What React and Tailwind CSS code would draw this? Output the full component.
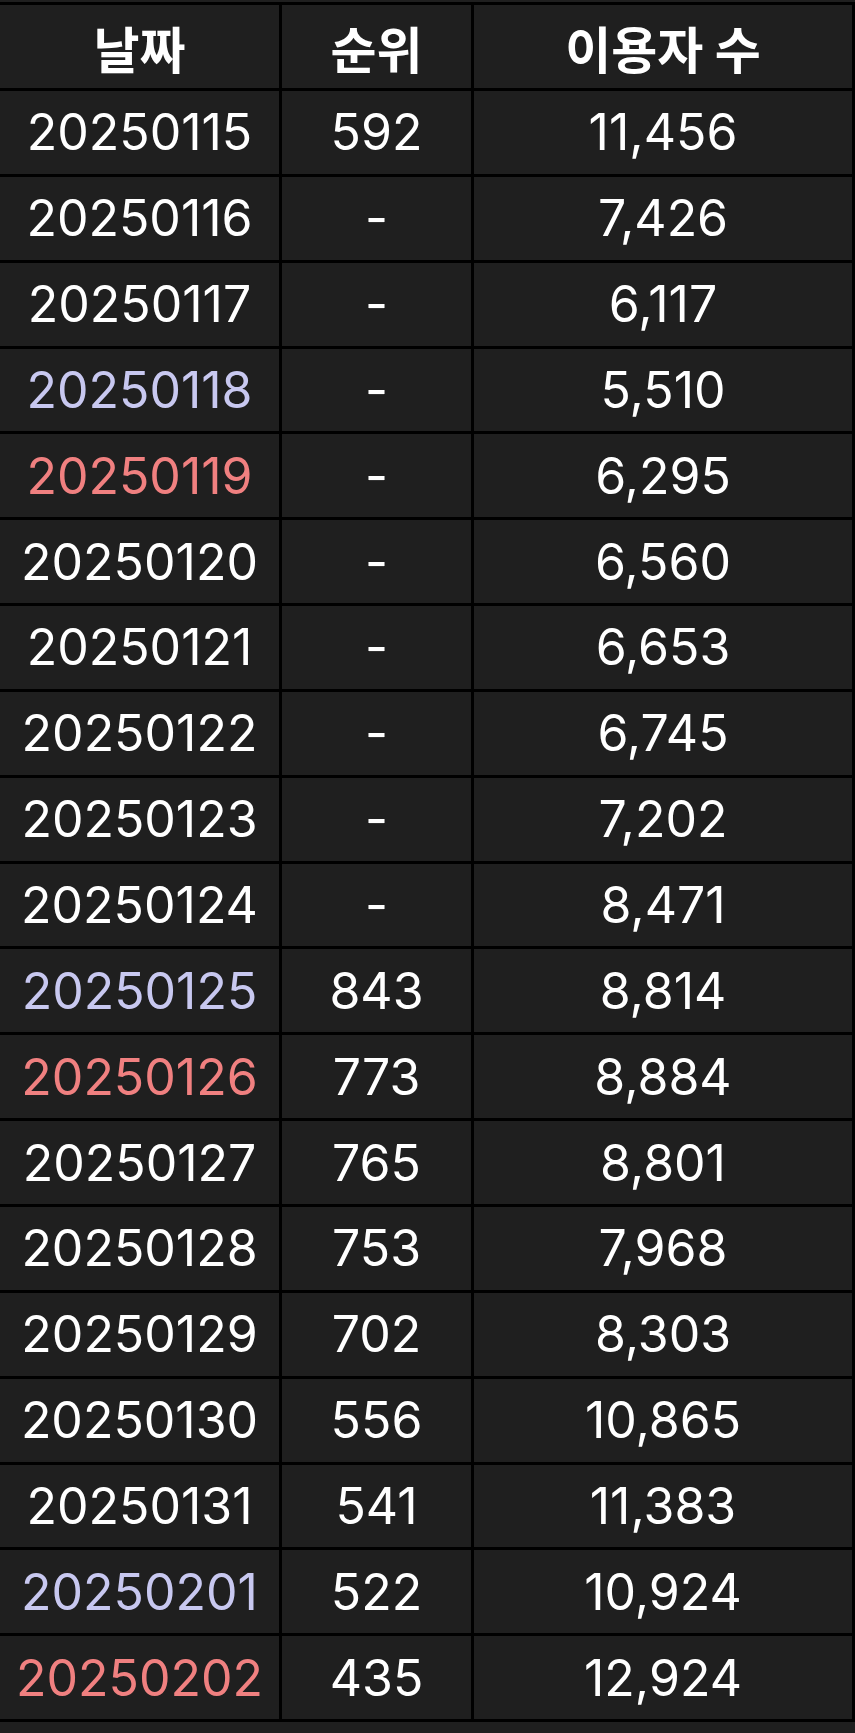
import React from 'react'

const rows = [
  ['20250115', '592', '11,456'],
  ['20250116', '-', '7,426'],
  ['20250117', '-', '6,117'],
  ['20250118', '-', '5,510', 'sat'],
  ['20250119', '-', '6,295', 'sun'],
  ['20250120', '-', '6,560'],
  ['20250121', '-', '6,653'],
  ['20250122', '-', '6,745'],
  ['20250123', '-', '7,202'],
  ['20250124', '-', '8,471'],
  ['20250125', '843', '8,814', 'sat'],
  ['20250126', '773', '8,884', 'sun'],
  ['20250127', '765', '8,801'],
  ['20250128', '753', '7,968'],
  ['20250129', '702', '8,303'],
  ['20250130', '556', '10,865'],
  ['20250131', '541', '11,383'],
  ['20250201', '522', '10,924', 'sat'],
  ['20250202', '435', '12,924', 'sun'],
]

const dayColor = {
  sat: 'text-[#c8c8f0]',
  sun: 'text-[#f08080]',
}

function App() {
  return (
    <div className="min-h-screen bg-[#1f1f1f] pt-[2px] font-['Inter','Noto_Sans_CJK_KR',sans-serif] text-white">
      <div className="border-t-[3px] border-black">
        {/* Header */}
        <div className="flex h-[86px] border-b-[3px] border-black font-['Noto_Sans_CJK_KR',sans-serif] text-[50px] font-bold leading-none">
          <div className="flex w-[282px] items-center justify-center border-r-[3px] border-black">날짜</div>
          <div className="flex w-[192px] items-center justify-center border-r-[3px] border-black">순위</div>
          <div className="flex w-[381px] items-center justify-center border-r-[3px] border-black">이용자 수</div>
        </div>

        {rows.map(([date, rank, users, day]) => (
          <div key={date} className="flex h-[85.85px] border-b-[3px] border-black text-[50px] leading-none">
            <div className={`flex w-[282px] items-center justify-center border-r-[3px] border-black ${day ? dayColor[day] : ''}`}>
              {date}
            </div>
            <div className="flex w-[192px] items-center justify-center border-r-[3px] border-black">{rank}</div>
            <div className="flex w-[381px] items-center justify-center border-r-[3px] border-black">{users}</div>
          </div>
        ))}
      </div>
    </div>
  )
}

export default App
